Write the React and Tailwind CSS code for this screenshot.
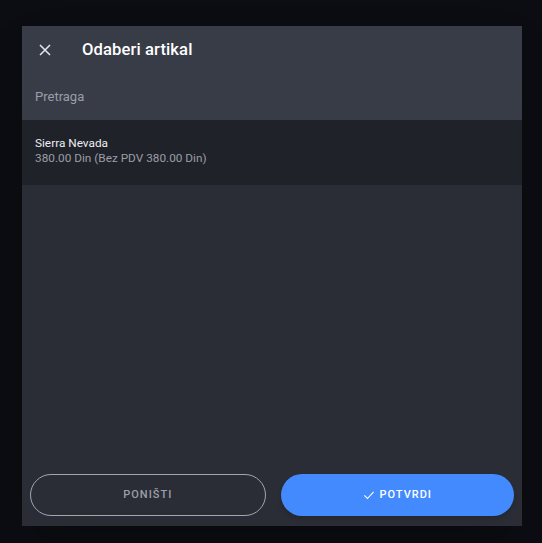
import React from 'react';

const CloseIcon = () => (
    <svg width="14" height="14" viewBox="0 0 14 14" fill="none" stroke="currentColor" strokeWidth="1.5">
        <path d="M2 2 L12 12 M12 2 L2 12" />
    </svg>
);

const CheckIcon = () => (
    <svg width="12" height="12" viewBox="0 0 13 13" fill="none" stroke="currentColor" strokeWidth="1.2">
        <path d="M1.5 7 L4.8 10.3 L11.5 3" />
    </svg>
);

const App = () => {
    return (
        <div className="w-[542px] h-[543px] bg-[#0b0d12] pt-[26px] pl-[22px]" style={{ fontFamily: 'Roboto, "Liberation Sans", sans-serif' }}>
            <div className="w-[500px] h-[500px] bg-[#2a2d36] flex flex-col shadow-2xl">
                {/* en-tête */}
                <div className="bg-[#383c47]">
                    <div className="h-[48px] flex items-center">
                        <button className="w-[44px] pl-[16px] text-[#e6e7ea] flex items-center">
                            <CloseIcon />
                        </button>
                        <h2 className="ml-[16px] text-[16.6px] font-medium text-white tracking-[0.1px]">Odaberi artikal</h2>
                    </div>
                    <div className="h-[46px] flex items-center px-[13px]">
                        <span className="text-[13px] text-[#9a9ea7]">Pretraga</span>
                    </div>
                </div>

                {/* liste */}
                <div className="flex-1">
                    <div className="bg-[#20222a] h-[65px] flex flex-col justify-center px-[13px] pb-[4px] antialiased">
                        <p className="text-[11.8px] text-[#eceef1] leading-[15px]">Sierra Nevada</p>
                        <p className="text-[11.8px] text-[#9a9ea7] leading-[15px]">380.00 Din (Bez PDV 380.00 Din)</p>
                    </div>
                </div>

                {/* boutons */}
                <div className="flex gap-[15px] px-[8px] pb-[10px]">
                    <button className="flex-1 h-[42px] rounded-full border border-[#a3a6ad] text-[#9c9fa6] text-[11px] font-medium tracking-[1px]">
                        PONIŠTI
                    </button>
                    <button className="flex-1 h-[42px] rounded-full bg-[#448aff] text-white text-[11px] font-medium tracking-[1px] flex items-center justify-center gap-[5px] shadow-md">
                        <CheckIcon />
                        POTVRDI
                    </button>
                </div>
            </div>
        </div>
    );
};

export default App;
